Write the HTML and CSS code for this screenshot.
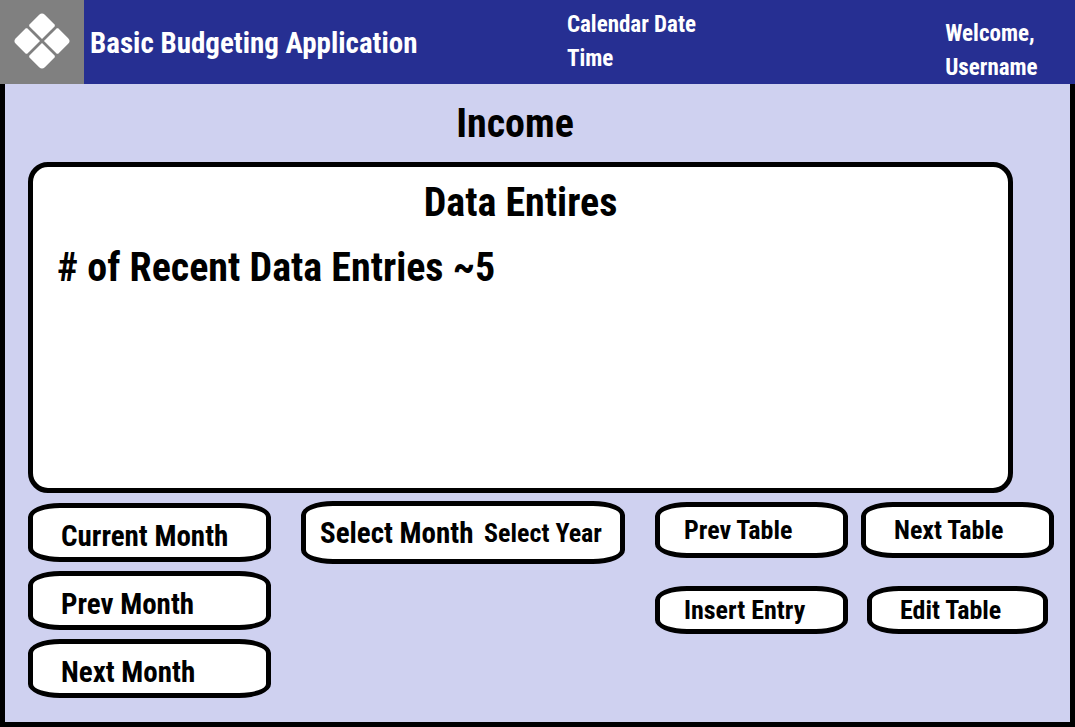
FILE: index.html
```html
<!DOCTYPE html>
<html lang="en">
<head>
<meta charset="utf-8">
<title>Basic Budgeting Application</title>
<link rel="stylesheet" href="styles.css">
</head>
<body>
<header class="topbar">
  <svg class="logo" viewBox="0 0 84 84" aria-hidden="true">
    <rect width="84" height="84" fill="#808080"/>
    <g fill="#fff" transform="translate(42 41) rotate(45)">
      <path d="M1.400 1.400H19.500L20.500 2.400V16.500Q20.500 20.500 16.500 20.500H2.400L1.400 19.500Z"/>
      <path transform="rotate(90)" d="M1.400 1.400H19.500L20.500 2.400V16.500Q20.500 20.500 16.500 20.500H2.400L1.400 19.500Z"/>
      <path transform="rotate(180)" d="M1.400 1.400H19.500L20.500 2.400V16.500Q20.500 20.500 16.500 20.500H2.400L1.400 19.500Z"/>
      <path transform="rotate(270)" d="M1.400 1.400H19.500L20.500 2.400V16.500Q20.500 20.500 16.500 20.500H2.400L1.400 19.500Z"/>
    </g>
  </svg>
  <h1 class="app-title">Basic Budgeting Application</h1>
  <div class="clock"><div>Calendar Date</div><div>Time</div></div>
  <div class="welcome"><div>Welcome,</div><div>Username</div></div>
</header>
<main class="page">
  <h2 class="page-title">Income</h2>
  <section class="panel">
    <h3 class="panel-title">Data Entires</h3>
    <p class="panel-text"># of Recent Data Entries ~5</p>
  </section>
  <div class="controls">
    <div class="months">
      <button class="pill month" type="button">Current Month</button>
      <button class="pill month" type="button">Prev Month</button>
      <button class="pill month" type="button">Next Month</button>
    </div>
    <div class="pill picker">
      <select class="pick pick-month" aria-label="Select Month"><option>Select Month</option></select>
      <select class="pick pick-year" aria-label="Select Year"><option>Select Year</option></select>
    </div>
    <div class="tables">
      <button class="pill table-nav" type="button">Prev Table</button>
      <button class="pill table-nav next" type="button">Next Table</button>
      <button class="pill entry" type="button">Insert Entry</button>
      <button class="pill entry edit" type="button">Edit Table</button>
    </div>
  </div>
</main>
</body>
</html>
```
FILE: styles.css
```css
* { box-sizing: border-box; }

body {
  margin: 0;
  min-height: 100vh;
  display: flex;
  flex-direction: column;
  font-family: "Bahnschrift Condensed", "Roboto Condensed", "Open Sans Condensed", "Liberation Sans Narrow", "Liberation Sans", sans-serif;
  font-weight: 700;
  color: #000;
}

h1, h2, h3, p { margin: 0; font-weight: 700; }

.topbar {
  display: grid;
  grid-template-columns: 84px 478fr 376fr 131fr;
  height: 84px;
  background: #262f92;
  color: #fff;
}

.logo { width: 84px; height: 84px; }

.app-title {
  align-self: center;
  padding-left: 6px;
  font-size: 29px;
  line-height: 36px;
  white-space: nowrap;
}

.clock, .welcome {
  padding-top: 8px;
  padding-left: 2px;
  font-size: 23px;
  line-height: 34px;
  white-space: nowrap;
}

.welcome { padding-top: 17px; }

.page {
  flex: 1;
  display: flex;
  flex-direction: column;
  padding: 16px 16px 24px 23px;
  border: 5px solid #000;
  border-top: 0;
  background: #cfd1f0;
}

.page-title {
  margin-right: 52px;
  padding-bottom: 14px;
  text-align: center;
  font-size: 40px;
  line-height: 48px;
}

.panel {
  flex: 1;
  min-height: 331px;
  margin-right: 41px;
  padding: 12px 24px;
  border: 5px solid #000;
  border-radius: 20px;
  background: #fff;
}

.panel-title {
  text-align: center;
  font-size: 40px;
  line-height: 48px;
}

.panel-text {
  padding-top: 17px;
  font-size: 40px;
  line-height: 48px;
}

.controls {
  display: grid;
  grid-template-columns: 243fr 324fr 399fr;
  gap: 30px;
  align-items: start;
  padding-top: 8px;
}

.pill {
  border: 5px solid #000;
  border-radius: 32px / 14px;
  background: #fff;
  color: #000;
  font: inherit;
  text-align: left;
  white-space: nowrap;
}

.months { display: grid; gap: 9px; padding-top: 2px; }

.month {
  height: 59px;
  padding: 6px 0 0 28px;
  font-size: 29px;
}

.picker {
  display: flex;
  align-items: center;
  gap: 10px;
  height: 63px;
  padding-left: 14px;
}

.pick {
  appearance: none;
  padding: 0;
  border: 0;
  background: transparent;
  color: #000;
  font: inherit;
}

.pick-month { font-size: 29px; }
.pick-year { font-size: 26px; }

.tables {
  display: grid;
  grid-template-columns: 1fr 1fr;
  gap: 28px 13px;
  align-items: center;
  padding-top: 1px;
  font-size: 26px;
}

.table-nav { height: 56px; padding: 0 0 0 24px; }
.entry { height: 48px; padding: 0 0 0 24px; }
.next { padding-left: 28px; }
.edit { margin: 0 6px; padding-left: 28px; }
```
